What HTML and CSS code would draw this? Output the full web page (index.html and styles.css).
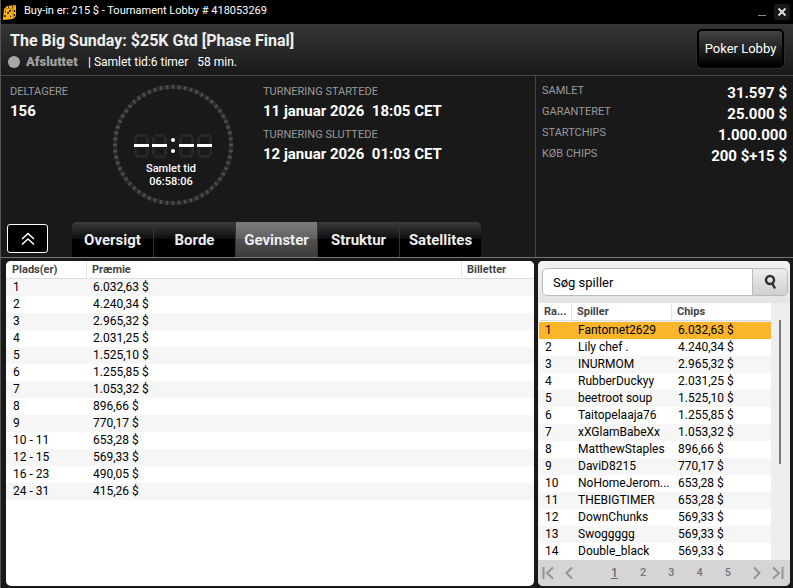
FILE: index.html
```html
<!DOCTYPE html>
<html lang="da">
<head>
  <meta charset="utf-8">
  <meta name="viewport" content="width=device-width, initial-scale=1">
  <title>Tournament Lobby</title>
  <link rel="stylesheet" href="styles.css">
</head>
<body>
  <div class="window">
    <header class="titlebar">
      <svg class="logo" width="14" height="15" viewBox="0 0 14 15">
        <path d="M1 4L4 1L13 0L13 11L10 14L0 15Z" fill="#fdb515"/>
        <path d="M1 4L10 3L13 0M10 3L10 14" fill="none" stroke="#a86f00" stroke-width="0.8"/>
        <path d="M2 10v2M4 8h2M6 7l2 -2M11.500 5v2M11.500 9v2M5 2h1M9 1.500h1M2 6.500h1M7 11.500h1" fill="none" stroke="#201500" stroke-width="1.4"/>
      </svg>
      <span class="titlebar-text">Buy-in er: 215 $ - Tournament Lobby # 418053269</span>
      <button class="win-btn" aria-label="Minimer">
        <svg width="16" height="16" viewBox="0 0 16 16"><path d="M4 11.500h8" stroke="#888" stroke-width="1"/></svg>
      </button>
      <button class="win-btn win-close" aria-label="Luk">
        <svg width="16" height="16" viewBox="0 0 16 16"><path d="M4.500 4.500L11.500 11.500M11.500 4.500L4.500 11.500" stroke="#ddd" stroke-width="2"/></svg>
      </button>
    </header>

    <div class="heading">
      <div class="heading-main">
        <h1 class="name">The Big Sunday: $25K Gtd [Phase Final]</h1>
        <div class="status">
          <span class="dot"></span>
          <span class="state">Afsluttet</span>
          <span class="duration">| Samlet tid:6 timer &nbsp; 58 min.</span>
        </div>
      </div>
      <button class="lobby-btn">Poker Lobby</button>
    </div>

    <div class="info">
      <div class="info-left">
        <div class="summary">
          <div class="players">
            <div class="label">DELTAGERE</div>
            <div class="value">156</div>
          </div>
          <div class="clock">
            <svg width="120" height="120" viewBox="0 0 120 120">
              <defs>
                <g id="digit">
                  <path d="M2 1.500h11M2 22.500h11M1.500 3v7M13.500 3v7M1.500 14v7M13.500 14v7" stroke="#272727" stroke-width="3"/>
                  <path d="M0 10h15v3h-15z" fill="#fff"/>
                </g>
              </defs>
              <circle cx="60" cy="60" r="58" fill="none" stroke="#2a2a2a" stroke-width="4"/>
              <circle cx="60" cy="60" r="58" fill="none" stroke="#4c4c4c" stroke-width="4" pathLength="300" stroke-dasharray="2 3" stroke-dashoffset="1"/>
              <use href="#digit" x="21" y="49"/>
              <use href="#digit" x="39" y="49"/>
              <use href="#digit" x="66" y="49"/>
              <use href="#digit" x="84" y="49"/>
              <circle cx="60" cy="55" r="2" fill="#fff"/>
              <circle cx="60" cy="66" r="2" fill="#fff"/>
            </svg>
            <div class="clock-text">Samlet tid<br>06:58:06</div>
          </div>
          <div class="dates">
            <div class="label">TURNERING STARTEDE</div>
            <div class="value">11 januar 2026&nbsp; 18:05 CET</div>
            <div class="label">TURNERING SLUTTEDE</div>
            <div class="value">12 januar 2026&nbsp; 01:03 CET</div>
          </div>
        </div>
        <div class="nav">
          <button class="collapse-btn" aria-label="Skjul">
            <svg width="14" height="14" viewBox="0 0 14 14"><path d="M1 7L7 1.500L13 7M1 12.500L7 7L13 12.500" fill="none" stroke="#fff" stroke-width="1.600"/></svg>
          </button>
          <nav class="tabs">
            <button class="tab">Oversigt</button>
            <button class="tab">Borde</button>
            <button class="tab active">Gevinster</button>
            <button class="tab">Struktur</button>
            <button class="tab">Satellites</button>
          </nav>
        </div>
      </div>
      <dl class="stats">
        <div class="stat"><dt>SAMLET</dt><dd>31.597 $</dd></div>
        <div class="stat"><dt>GARANTERET</dt><dd>25.000 $</dd></div>
        <div class="stat"><dt>STARTCHIPS</dt><dd>1.000.000</dd></div>
        <div class="stat"><dt>KØB CHIPS</dt><dd>200 $+15 $</dd></div>
      </dl>
    </div>

    <main class="content">
      <section class="panel prizes">
        <table class="grid">
          <colgroup><col class="col-place"><col><col class="col-ticket"></colgroup>
          <thead>
            <tr><th>Plads(er)</th><th>Præmie</th><th>Billetter</th></tr>
          </thead>
          <tbody>
            <tr><td>1</td><td>6.032,63 $</td><td></td></tr>
            <tr><td>2</td><td>4.240,34 $</td><td></td></tr>
            <tr><td>3</td><td>2.965,32 $</td><td></td></tr>
            <tr><td>4</td><td>2.031,25 $</td><td></td></tr>
            <tr><td>5</td><td>1.525,10 $</td><td></td></tr>
            <tr><td>6</td><td>1.255,85 $</td><td></td></tr>
            <tr><td>7</td><td>1.053,32 $</td><td></td></tr>
            <tr><td>8</td><td>896,66 $</td><td></td></tr>
            <tr><td>9</td><td>770,17 $</td><td></td></tr>
            <tr><td>10 - 11</td><td>653,28 $</td><td></td></tr>
            <tr><td>12 - 15</td><td>569,33 $</td><td></td></tr>
            <tr><td>16 - 23</td><td>490,05 $</td><td></td></tr>
            <tr><td>24 - 31</td><td>415,26 $</td><td></td></tr>
          </tbody>
        </table>
      </section>

      <aside class="panel ranking">
        <form class="search">
          <input class="search-input" type="text" aria-label="Søg spiller" placeholder="Søg spiller">
          <button class="search-btn" type="button" aria-label="Søg">
            <svg width="14" height="16" viewBox="0 0 14 16"><circle cx="7" cy="6" r="4" fill="none" stroke="#333" stroke-width="2.500"/><path d="M9 9L12 14.500" stroke="#333" stroke-width="2.500"/></svg>
          </button>
        </form>
        <div class="list">
          <table class="grid">
            <colgroup><col class="col-rank"><col><col class="col-chips"></colgroup>
            <thead>
              <tr><th>Ra...</th><th>Spiller</th><th>Chips</th></tr>
            </thead>
            <tbody>
              <tr class="selected"><td>1</td><td>Fantomet2629</td><td>6.032,63 $</td></tr>
              <tr><td>2</td><td>Lily chef .</td><td>4.240,34 $</td></tr>
              <tr><td>3</td><td>INURMOM</td><td>2.965,32 $</td></tr>
              <tr><td>4</td><td>RubberDuckyy</td><td>2.031,25 $</td></tr>
              <tr><td>5</td><td>beetroot soup</td><td>1.525,10 $</td></tr>
              <tr><td>6</td><td>Taitopelaaja76</td><td>1.255,85 $</td></tr>
              <tr><td>7</td><td>xXGlamBabeXx</td><td>1.053,32 $</td></tr>
              <tr><td>8</td><td>MatthewStaples</td><td>896,66 $</td></tr>
              <tr><td>9</td><td>DaviD8215</td><td>770,17 $</td></tr>
              <tr><td>10</td><td>NoHomeJerom...</td><td>653,28 $</td></tr>
              <tr><td>11</td><td>THEBIGTIMER</td><td>653,28 $</td></tr>
              <tr><td>12</td><td>DownChunks</td><td>569,33 $</td></tr>
              <tr><td>13</td><td>Swoggggg</td><td>569,33 $</td></tr>
              <tr><td>14</td><td>Double_black</td><td>569,33 $</td></tr>
            </tbody>
          </table>
          <div class="scrollbar"><div class="thumb"></div></div>
        </div>
        <nav class="pager">
          <a class="arrow" href="#" aria-label="Første"><svg width="12" height="14" viewBox="0 0 12 14"><path d="M1.500 1v12M11 1.500L5 7L11 12.500" fill="none" stroke="#949494" stroke-width="2"/></svg></a>
          <a class="arrow" href="#" aria-label="Forrige"><svg width="8" height="14" viewBox="0 0 8 14"><path d="M7 1.500L1.500 7L7 12.500" fill="none" stroke="#949494" stroke-width="2"/></svg></a>
          <div class="pages">
            <a class="page current" href="#">1</a>
            <a class="page" href="#">2</a>
            <a class="page" href="#">3</a>
            <a class="page" href="#">4</a>
            <a class="page" href="#">5</a>
          </div>
          <a class="arrow" href="#" aria-label="Næste"><svg width="8" height="14" viewBox="0 0 8 14"><path d="M1 1.500L6.500 7L1 12.500" fill="none" stroke="#949494" stroke-width="2"/></svg></a>
          <a class="arrow" href="#" aria-label="Sidste"><svg width="12" height="14" viewBox="0 0 12 14"><path d="M10.500 1v12M1 1.500L7 7L1 12.500" fill="none" stroke="#949494" stroke-width="2"/></svg></a>
        </nav>
      </aside>
    </main>
  </div>
</body>
</html>
```

FILE: styles.css
```css
* {
  box-sizing: border-box;
}

body {
  margin: 0;
  font-family: Roboto, "Liberation Sans", sans-serif;
  font-size: 12px;
  color: #fff;
  background: #191919;
}

button,
input {
  font-family: inherit;
  margin: 0;
}

button {
  padding: 0;
  cursor: pointer;
}

svg {
  display: block;
}

.window {
  display: flex;
  flex-direction: column;
  min-height: 100vh;
  border-left: 1px solid #555;
}

/* title bar */
.titlebar {
  display: flex;
  align-items: center;
  height: 24px;
  padding: 0 3px 0 2px;
  background: #000;
}

.titlebar-text {
  flex: 1;
  padding-left: 7px;
  padding-bottom: 3px;
  font-size: 11px;
  line-height: 20px;
}

.win-btn {
  width: 16px;
  height: 16px;
  margin-left: 4px;
  border: none;
  border-radius: 2px;
  background: none;
}

.win-close {
  background: #181818;
}

.heading {
  display: flex;
  justify-content: space-between;
  height: 52px;
  padding: 5px 9px 0;
  border-bottom: 1px solid #4a4a4a;
  background: linear-gradient(#363636, #191919);
}

.name {
  margin: 0;
  font-size: 16px;
  font-weight: 700;
  line-height: 24px;
  color: #eee;
}

.status {
  display: flex;
  align-items: center;
  line-height: 18px;
}

.dot {
  width: 12px;
  height: 12px;
  margin-left: -2px;
  border-radius: 50%;
  background: #a8a8a8;
}

.state {
  width: 68px;
  padding-left: 6px;
  font-size: 13px;
  font-weight: 900;
  color: #a0a0a0;
}

.lobby-btn {
  width: 87px;
  height: 39px;
  border: 2px solid #000;
  border-radius: 5px;
  box-shadow: 0 0 0 1px #2c2c2c;
  font-size: 13px;
  color: #fff;
  background: linear-gradient(#444, #000);
}

/* tournament info */
.info {
  display: flex;
  height: 182px;
  border-bottom: 1px solid #777;
}

.info-left {
  display: flex;
  flex: 1;
  flex-direction: column;
  justify-content: space-between;
}

.summary {
  display: flex;
  padding: 8px 9px 0;
}

.players {
  width: 103px;
}

.label {
  font-size: 11px;
  line-height: 16px;
  color: #999;
}

.value {
  font-size: 15px;
  font-weight: 700;
  line-height: 23px;
}

.dates {
  padding-left: 30px;
}

.dates .value {
  padding-bottom: 4px;
}

.clock {
  display: grid;
  margin-top: 1px;
}

.clock > * {
  grid-area: 1 / 1;
}

.clock-text {
  align-self: end;
  padding: 0 4px 17px 0;
  font-size: 11px;
  font-weight: 500;
  line-height: 13px;
  text-align: center;
}

.nav {
  display: flex;
  align-items: center;
  padding-left: 6px;
}

.collapse-btn {
  display: flex;
  align-items: center;
  justify-content: center;
  width: 41px;
  height: 29px;
  margin-bottom: 2px;
  border: 1px solid #fff;
  border-radius: 3px;
  background: #000;
}

.tabs {
  display: flex;
  gap: 1px;
  margin-left: 24px;
  border-radius: 5px 5px 0 0;
  overflow: hidden;
  background: #333;
}

.tab {
  width: 81px;
  height: 35px;
  border: none;
  font-size: 15px;
  font-weight: 700;
  color: #eee;
  background: linear-gradient(#3c3c3c, #0e0e0e 48%, #000 50%);
}

.tab.active {
  background: linear-gradient(#7d7d7d, #606060 48%, #505050 50%, #3c3c3c);
}

.stats {
  width: 258px;
  margin: 0;
  padding: 5px 6px 0 6px;
  border-left: 1px solid #444;
}

.stat {
  display: flex;
  justify-content: space-between;
  height: 21px;
}

.stat dt {
  font-size: 11px;
  line-height: 20px;
  color: #999;
}

.stat dd {
  margin: 0;
  font-size: 15px;
  font-weight: 700;
  line-height: 24px;
}

/* panels */
.content {
  display: flex;
  flex: 1;
  gap: 4px;
  padding: 3px 3px 3px 5px;
}

.panel {
  border-radius: 5px;
  overflow: hidden;
  color: #000;
}

.prizes {
  flex: 1;
  background: #fff;
}

.ranking {
  display: flex;
  flex-direction: column;
  width: 252px;
  background: #eee;
}

.grid {
  width: 100%;
  table-layout: fixed;
  border-collapse: separate;
  border-spacing: 0;
}

.grid th {
  height: 18px;
  padding: 0 5px;
  border-left: 1px solid #e4e4e4;
  border-bottom: 1px solid #ddd;
  font-size: 11px;
  font-weight: 700;
  line-height: 17px;
  text-align: left;
  color: #444;
  background: #fff;
}

.grid th:first-child {
  border-left-color: #fff;
}

.grid td {
  height: 17px;
  padding: 0 0 0 7px;
  line-height: 17px;
  white-space: nowrap;
  background: #fff;
}

.grid tbody tr:nth-child(odd) td {
  background: #f6f6f6;
}

.grid tbody tr.selected td {
  background: #fbb52b;
}

.col-place {
  width: 80px;
}

.col-ticket {
  width: 73px;
}

.col-rank {
  width: 32px;
}

.col-chips {
  width: 100px;
}

.search {
  display: flex;
  height: 42px;
  padding: 7px 2px 7px 4px;
  background: linear-gradient(#f2f2f2, #e4e4e4);
}

.search-input {
  flex: 1;
  min-width: 0;
  padding: 0 10px;
  border: 1px solid #bbb;
  border-radius: 5px 0 0 5px;
  font-size: 13px;
  background: #fff;
}

.search-input::placeholder {
  color: #000;
  opacity: 1;
}

.search-btn {
  display: flex;
  align-items: center;
  justify-content: center;
  width: 35px;
  border: 1px solid #bbb;
  border-left: none;
  border-radius: 0 5px 5px 0;
  background: linear-gradient(#eee, #d0d0d0);
}

.list {
  display: flex;
  flex: 1;
  padding-left: 1px;
}

.list .grid {
  flex: 1;
  align-self: start;
}

.list th:first-child {
  padding-left: 4px;
}

.list td:first-child {
  padding-left: 6px;
}

.list thead::after {
  content: "";
  display: block;
  height: 1px;
  background: #fff;
}

.scrollbar {
  width: 19px;
  padding: 17px 0 0 8px;
}

.thumb {
  width: 2px;
  height: 144px;
  background: #777;
}

.pager {
  display: flex;
  align-items: center;
  gap: 11px;
  height: 26px;
  padding: 0 6px 0 4px;
  background: #d5d5d5;
}

.pages {
  display: flex;
  flex: 1;
  justify-content: center;
  gap: 22px;
  padding-left: 16px;
}

.page {
  font-size: 11px;
  font-weight: 500;
  line-height: 16px;
  color: #777;
  text-decoration: none;
}

.page.current {
  font-size: 12px;
  color: #667;
  text-decoration: underline;
}
```
